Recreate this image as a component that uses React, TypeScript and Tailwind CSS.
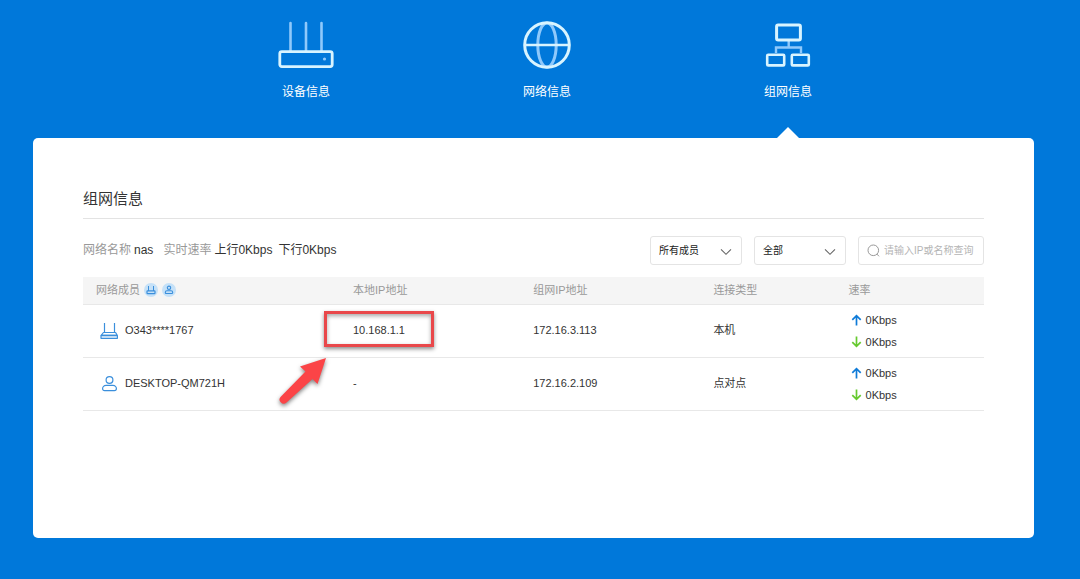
import React from 'react';

const RouterIcon = () => (
  <svg width="56" height="50" viewBox="0 0 56 50" fill="none">
    <path d="M12.5 3v28M28 3v28M43.5 3v28" stroke="#8fc9fb" strokeWidth="2.6" strokeLinecap="round" />
    <rect x="1.8" y="31.6" width="52.4" height="15" rx="2" stroke="#d8f4ff" strokeWidth="2.8" />
    <circle cx="46.5" cy="39" r="1.6" fill="#8fc9fb" />
  </svg>
);

const GlobeIcon = () => (
  <svg width="50" height="50" viewBox="0 0 50 50" fill="none">
    <ellipse cx="25" cy="25" rx="9.2" ry="22" stroke="#8fc9fb" strokeWidth="3" />
    <path d="M3 25h44" stroke="#d8f4ff" strokeWidth="2.6" />
    <circle cx="25" cy="25" r="22.3" stroke="#d8f4ff" strokeWidth="3" />
  </svg>
);

const NetworkIcon = () => (
  <svg width="50" height="50" viewBox="0 0 50 50" fill="none">
    <path d="M25.7 21v6.5M13 33v-5.5h25V33" stroke="#8fc9fb" strokeWidth="2.4" />
    <rect x="13.6" y="5" width="23.8" height="15" rx="1.5" stroke="#d8f4ff" strokeWidth="3" />
    <rect x="4.2" y="34.8" width="17" height="10.6" rx="1" stroke="#d8f4ff" strokeWidth="2.6" />
    <rect x="28.8" y="34.8" width="17" height="10.6" rx="1" stroke="#d8f4ff" strokeWidth="2.6" />
  </svg>
);

const MemberRouterIcon = () => (
  <svg width="18" height="18" viewBox="0 0 18 18" fill="none" stroke="#3b8fdc">
    <path d="M4.5 1v9.5M14.5 1v9.5" strokeWidth="1.2" />
    <path d="M3.4 10.5h12.2l1.6 2.8H1.2z" strokeWidth="1.2" strokeLinejoin="round" />
    <rect x="1" y="13.3" width="16.4" height="3.2" rx=".6" fill="#c3dcf3" strokeWidth="1.2" />
  </svg>
);

const MemberUserIcon = () => (
  <svg width="18" height="18" viewBox="0 0 18 18" fill="none" stroke="#3b8fdc" strokeWidth="1.2">
    <circle cx="9.5" cy="5" r="3.4" />
    <path d="M6 10.3h7c2 0 3.400 1.600 3.400 3.200 0 1.400-.8 2.100-2 2.100H4.600c-1.200 0-2-.7-2-2.100 0-1.600 1.400-3.200 3.400-3.200z" />
  </svg>
);

// 表头小图标
const RouterBadge = () => (
  <span className="ml-1 flex size-[14px] items-center justify-center rounded-full bg-[#c5e1f8]">
    <svg width="10" height="10" viewBox="0 0 10 10" fill="none" stroke="#3b8fdc">
      <path d="M2.5 1v5M7.5 1v5" />
      <rect x="1" y="5.8" width="8" height="2.800" rx=".6" strokeWidth="1.2" />
    </svg>
  </span>
);

const UserBadge = () => (
  <span className="ml-1 flex size-[14px] items-center justify-center rounded-full bg-[#c5e1f8]">
    <svg width="10" height="10" viewBox="0 0 10 10" fill="none" stroke="#3b8fdc" strokeWidth="1.1">
      <circle cx="5" cy="2.8" r="1.7" />
      <path d="M3 5.800h4c1 0 1.700.8 1.700 1.700 0 .7-.4 1-1 1H2.300c-.6 0-1-.3-1-1 0-.9.700-1.700 1.700-1.700z" />
    </svg>
  </span>
);

const Arrow = ({ down = false }: { down?: boolean }) => (
  <svg
    width="11"
    height="12"
    viewBox="0 0 11 12"
    fill="none"
    strokeWidth="1.7"
    className={down ? 'rotate-180 stroke-[#66c92f]' : 'stroke-[#0f7bd8]'}
  >
    <path d="M5.5 11.5v-10M1.3 5.8l4.2-4.2 4.2 4.2" />
  </svg>
);

const tabs = [
  { label: '设备信息', icon: <RouterIcon /> },
  { label: '网络信息', icon: <GlobeIcon /> },
  { label: '组网信息', icon: <NetworkIcon /> },
];

const members = [
  { name: 'O343****1767', icon: <MemberRouterIcon />, local: '10.168.1.1', ip: '172.16.3.113', type: '本机', marked: true },
  { name: 'DESKTOP-QM721H', icon: <MemberUserIcon />, local: '-', ip: '172.16.2.109', type: '点对点', marked: false },
];

const Select = ({ label, options }: { label: string; options: string[] }) => (
  <div className="relative">
    <select
      aria-label={label}
      className="block h-[29px] w-[92px] appearance-none rounded-[3px] border border-[#e4e4e4] bg-white pl-2 pr-6 text-[10px] text-[#222]"
    >
      {options.map((o) => (
        <option key={o}>{o}</option>
      ))}
    </select>
    <svg
      width="12"
      height="8"
      viewBox="0 0 12 8"
      fill="none"
      className="pointer-events-none absolute right-[10px] top-3"
    >
      <path d="M1 1.3l5 5 5-5" stroke="#666" strokeWidth="1.1" />
    </svg>
  </div>
);

// 本地IP上的红框和箭头
const Marker = () => (
  <>
    <span className="pointer-events-none absolute -left-[29px] -top-[11px] h-[36px] w-[110px] border-[3px] border-[#e9484b] shadow-[0_2px_4px_rgba(0,0,0,0.45),inset_0_2px_4px_rgba(0,0,0,0.35)]" />
    <svg
      width="56"
      height="56"
      viewBox="0 0 56 56"
      className="pointer-events-none absolute -left-[77px] top-[34px] drop-shadow-[0_2px_2px_rgba(0,0,0,0.5)]"
    >
      <path d="M50 2L24 10.5l5.500 5L5 40.500a4 4 0 0 0 5.500 6L36.500 23l5 5z" fill="#fb4447" />
    </svg>
  </>
);

export default function App() {
  return (
    <div className="flex min-h-screen flex-col bg-[#0078da] font-['Liberation_Sans','Noto_Sans_CJK_SC',sans-serif] text-[#333]">
      <nav className="flex justify-center pl-[14px]">
        {tabs.map((tab, i) => (
          <button
            key={tab.label}
            type="button"
            className="relative flex w-[241px] flex-col items-center pb-[37px] pt-5 text-white"
          >
            {tab.icon}
            <span className="mt-[13px] text-xs leading-[18px]">{tab.label}</span>
            {i === 2 && (
              <svg width="22" height="11" viewBox="0 0 22 11" className="absolute bottom-0 left-1/2 -translate-x-1/2">
                <path d="M0 11L11 0l11 11z" fill="#fff" />
              </svg>
            )}
          </button>
        ))}
      </nav>

      <main className="mb-[41px] ml-[33px] mr-[46px] flex-1 rounded-[5px] bg-white px-[50px] pt-[50px]">
        <h1 className="border-b border-[#e3e3e3] pb-2 text-[15px] leading-[22px]">组网信息</h1>

        <div className="mt-[17px] flex items-center justify-between">
          <div className="flex items-center pb-[2px] text-xs">
            <span className="text-[#999]">网络名称</span>
            <span className="ml-[3px]">nas</span>
            <span className="ml-[10px] text-[#999]">实时速率</span>
            <span className="ml-[3px]">上行0Kbps</span>
            <span className="ml-[6px]">下行0Kbps</span>
          </div>
          <div className="flex gap-3">
            <Select label="成员" options={['所有成员']} />
            <Select label="连接类型" options={['全部']} />
            <label className="flex h-[29px] w-[126px] items-center rounded-[3px] border border-[#e4e4e4] pl-2">
              <svg width="13" height="13" viewBox="0 0 13 13" fill="none" stroke="#999" className="shrink-0">
                <circle cx="6.3" cy="6.3" r="5.3" />
                <path d="M9.8 10l2.2 2.3" />
              </svg>
              <input
                type="text"
                aria-label="查询"
                placeholder="请输入IP或名称查询"
                className="ml-1 w-full min-w-0 text-[10px] outline-none placeholder:text-[#b5b5b5]"
              />
            </label>
          </div>
        </div>

        <table className="mt-3 w-full table-fixed border-collapse text-left text-[11px]">
          <colgroup>
            <col className="w-[257px]" />
            <col className="w-[20%]" />
            <col className="w-[20%]" />
            <col className="w-[15%]" />
            <col />
          </colgroup>
          <thead>
            <tr className="h-[27px] border-b border-[#e8e8e8] bg-[#f5f5f5] text-[#999]">
              <th className="px-[13px] font-normal">
                <div className="flex items-center">
                  <span>网络成员</span>
                  <RouterBadge />
                  <UserBadge />
                </div>
              </th>
              <th className="px-[13px] font-normal">本地IP地址</th>
              <th className="px-[13px] font-normal">组网IP地址</th>
              <th className="px-[13px] font-normal">连接类型</th>
              <th className="px-[13px] font-normal">速率</th>
            </tr>
          </thead>
          <tbody>
            {members.map((m) => (
              <tr key={m.name} className="border-b border-[#e8e8e8]">
                <td className="px-[13px]">
                  <div className="flex items-center gap-[7px] pl-1">
                    {m.icon}
                    <span>{m.name}</span>
                  </div>
                </td>
                <td className="px-[13px]">
                  <span className="relative inline-block leading-4">
                    {m.local}
                    {m.marked && <Marker />}
                  </span>
                </td>
                <td className="px-[13px]">{m.ip}</td>
                <td className="px-[13px]">{m.type}</td>
                <td className="px-[13px] py-1 leading-[22px]">
                  <div className="flex items-center gap-1 pl-[2px]">
                    <Arrow />
                    <span>0Kbps</span>
                  </div>
                  <div className="flex items-center gap-1 pl-[2px]">
                    <Arrow down />
                    <span>0Kbps</span>
                  </div>
                </td>
              </tr>
            ))}
          </tbody>
        </table>
      </main>
    </div>
  );
}
